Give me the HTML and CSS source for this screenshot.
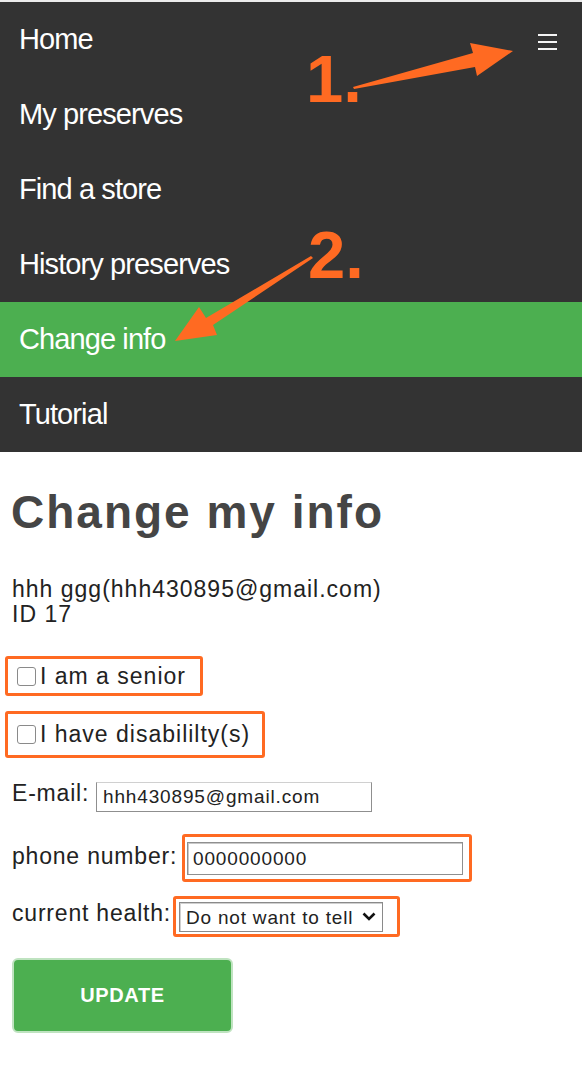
FILE: index.html
```html
<!DOCTYPE html>
<html lang="en">
<head>
<meta charset="utf-8">
<title>Change my info</title>
<link rel="stylesheet" href="styles.css">
</head>
<body>
<nav class="nav">
  <a class="nav-item" href="#">Home
    <span class="burger"><span></span><span></span><span></span></span>
  </a>
  <a class="nav-item" href="#">My preserves</a>
  <a class="nav-item" href="#">Find a store</a>
  <a class="nav-item" href="#">History preserves</a>
  <a class="nav-item active" href="#">Change info</a>
  <a class="nav-item" href="#">Tutorial</a>
</nav>

<main class="content">
  <h1 class="title">Change my info</h1>
  <p class="who">hhh ggg(hhh430895@gmail.com)<br>ID 17</p>

  <div class="mark mark-senior">
    <label class="check"><input type="checkbox" class="box">I am a senior</label>
  </div>
  <div class="mark mark-dis">
    <label class="check"><input type="checkbox" class="box">I have disabililty(s)</label>
  </div>

  <div class="field row-email">
    <span class="lbl lbl-email">E-mail:</span>
    <input class="inp inp-email" type="text" value="hhh430895@gmail.com">
  </div>

  <div class="field row-phone">
    <span class="lbl lbl-phone">phone number:</span>
    <span class="mark mark-phone"><input class="inp inp-phone" type="text" value="0000000000"></span>
  </div>

  <div class="field row-health">
    <span class="lbl lbl-health">current health:</span>
    <span class="mark mark-health">
      <span class="sel-wrap">
        <select class="sel"><option>Do not want to tell</option></select>
        <svg class="chev" width="14" height="9" viewBox="0 0 14 9"><path d="M1.5 1.5 L7 7 L12.5 1.5" fill="none" stroke="#111" stroke-width="2.6"/></svg>
      </span>
    </span>
  </div>

  <button class="btn" type="button">UPDATE</button>
</main>

<svg class="annot" width="582" height="460" viewBox="0 0 582 460">
  <polygon fill="#ff6a22" points="353,87 473,53 470,43 513,51 477,76 475,67 354,89"/>
  <text x="306" y="102" class="num">1.</text>
  <polygon fill="#ff6a22" points="311,256 206,318 199,307 175,341 217,335 213,325 313,258"/>
  <text x="308" y="278" class="num">2.</text>
</svg>
</body>
</html>
```

FILE: styles.css
```css
* { box-sizing: border-box; }

html, body {
  margin: 0;
  padding: 0;
  background: #ffffff;
}

body {
  position: relative;
  width: 582px;
  min-height: 1071px;
  font-family: "Liberation Sans", Arial, sans-serif;
  color: #222222;
}

/* ---------- navigation ---------- */
.nav {
  background: #333333;
  border-top: 2px solid #ececec;
}

.nav-item {
  display: flex;
  justify-content: space-between;
  align-items: center;
  height: 75px;
  padding: 0 25px 0 19px;
  color: #ffffff;
  font-size: 29px;
  letter-spacing: -0.9px;
  line-height: 75px;
  text-decoration: none;
}

.nav-item.active {
  background: #4caf50;
}

.burger {
  display: flex;
  flex-direction: column;
  gap: 5px;
  width: 19px;
  margin-top: 4px;
}

.burger span {
  height: 2px;
  background: #f4f4f4;
}

/* ---------- content ---------- */
.content {
  padding: 0 12px;
}

.title {
  margin: 33px 0 0 -1px;
  font-size: 46px;
  line-height: 54px;
  font-weight: 700;
  letter-spacing: 2px;
  color: #454545;
}

.who {
  margin: 38px 0 0;
  font-size: 23px;
  line-height: 25px;
  letter-spacing: 1px;
}

.mark {
  display: flex;
  width: fit-content;
  border: 3px solid #ff6a22;
  border-radius: 3px;
}

.mark-senior {
  margin: 29px 0 0 -7px;
  height: 40px;
  padding: 0 14px 0 9px;
  align-items: center;
}

.mark-dis {
  margin: 15px 0 0 -7px;
  height: 47px;
  padding: 0 12px 0 9px;
  align-items: center;
}

.check {
  display: flex;
  align-items: center;
  font-size: 23px;
  line-height: 25px;
  letter-spacing: 1px;
}

.box {
  appearance: none;
  -webkit-appearance: none;
  width: 19px;
  height: 19px;
  margin: 0 4px 0 0;
  border: 1px solid #8a8a8a;
  border-radius: 3px;
  background: #ffffff;
}

.field {
  display: flex;
  align-items: center;
  font-size: 23px;
  line-height: 25px;
  letter-spacing: 0.8px;
}

.lbl {
  flex-shrink: 0;
  white-space: nowrap;
}

.row-email {
  margin-top: 24px;
  height: 30px;
}

.lbl-email {
  width: 84px;
  margin-bottom: 8px;
}

.inp {
  font-family: "Liberation Sans", Arial, sans-serif;
  font-size: 19px;
  letter-spacing: 0.85px;
  color: #222222;
  background: #ffffff;
  outline: none;
}

.inp-email {
  width: 276px;
  height: 30px;
  padding: 0 0 0 6px;
  border: 1px solid #8f8f8f;
  border-top-color: #d0d0d0;
}

.row-phone {
  margin-top: 22px;
}

.lbl-phone {
  width: 170px;
  margin-bottom: 4px;
}

.mark-phone {
  padding: 5px 6px 4px 2px;
}

.inp-phone {
  width: 276px;
  height: 33px;
  padding: 0 0 0 5px;
  border: 1px solid #8f8f8f;
  box-shadow: inset 1px 1px 0 #c8c8c8;
}

.row-health {
  margin-top: 14px;
}

.lbl-health {
  width: 161px;
  margin-bottom: 6px;
}

.mark-health {
  padding: 3px 14px 2px 3px;
}

.sel-wrap {
  position: relative;
  display: block;
  width: 204px;
  height: 30px;
}

.sel {
  appearance: none;
  -webkit-appearance: none;
  display: block;
  width: 204px;
  height: 30px;
  padding: 0 0 0 6px;
  border: 1px solid #8a8a8a;
  box-shadow: inset 1px 1px 0 #cfcfcf;
  border-radius: 0;
  background: #ffffff;
  font-family: "Liberation Sans", Arial, sans-serif;
  font-size: 19px;
  letter-spacing: 0.8px;
  color: #222222;
}

.chev {
  position: absolute;
  left: 183px;
  top: 10px;
}

.btn {
  display: block;
  margin-top: 21px;
  width: 221px;
  height: 75px;
  background: #4caf50;
  border: 2px solid #bfe3c0;
  border-radius: 6px;
  color: #ffffff;
  font-family: "Liberation Sans", Arial, sans-serif;
  font-size: 20px;
  font-weight: 700;
  letter-spacing: 0.6px;
}

/* ---------- annotations ---------- */
.annot {
  position: absolute;
  left: 0;
  top: 0;
  pointer-events: none;
}

.num {
  font-family: "Liberation Sans", Arial, sans-serif;
  font-weight: 700;
  font-size: 67px;
  fill: #ff6a22;
}
```
